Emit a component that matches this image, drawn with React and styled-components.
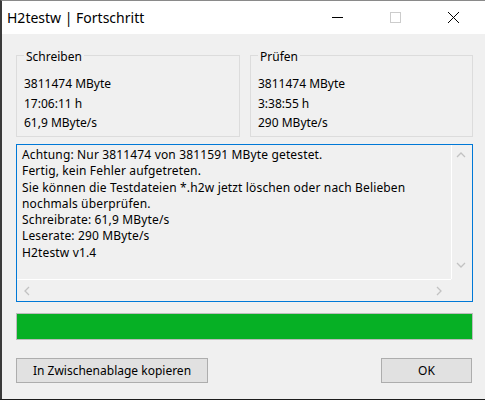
import React from 'react';
import styled, { createGlobalStyle } from 'styled-components';

const GlobalStyle = createGlobalStyle`
  html, body {
    margin: 0;
    padding: 0;
    background: #1c1c1c;
  }
  * {
    box-sizing: border-box;
  }
`;

const Window = styled.div`
  width: 485px;
  height: 399px;
  display: flex;
  flex-direction: column;
  background: #f0f0f0;
  border-left: 2px solid #3a3a3a;
  border-top: 1px solid #8a8a8a;
  font-family: "Noto Sans", "Open Sans", sans-serif;
  font-size: 12px;
  color: #000;
  overflow: hidden;
`;

const TitleBar = styled.div`
  height: 33px;
  flex: none;
  display: flex;
  align-items: center;
  background: #fff;
  padding: 0 3px 0 5px;
`;

const Title = styled.div`
  flex: 1;
  font-size: 14px;
  padding-bottom: 1px;
`;

const Caption = styled.div`
  width: 58px;
  height: 33px;
  display: flex;
  align-items: center;
  justify-content: center;
`;

const Body = styled.div`
  flex: 1;
  display: flex;
  flex-direction: column;
  padding: 11px 12px 0 14px;
`;

const Groups = styled.div`
  display: grid;
  grid-template-columns: 224px 223px;
  gap: 10px;
`;

const Group = styled.fieldset`
  margin: 0;
  height: 92px;
  border: 1px solid #dcdcdc;
  padding: 11px 0 0 7px;
  display: flex;
  flex-direction: column;
  gap: 3.5px;
`;

const Legend = styled.legend`
  margin-left: 0;
  padding: 4px 2px 0;
  line-height: 16px;
`;

const Value = styled.div`
  line-height: 16px;
`;

const TextBox = styled.div`
  margin-top: 7px;
  height: 158px;
  border: 1px solid #0078d7;
  display: grid;
  grid-template-columns: 1fr 21px;
  grid-template-rows: 1fr 22px;
`;

const TextArea = styled.div`
  padding: 2px 0 0 5px;
  line-height: 16.3px;
  white-space: pre;
  overflow: hidden;
  letter-spacing: 0.15px;
  background: #f0f0f0;
`;

const ScrollBar = styled.div`
  display: flex;
  flex-direction: ${p => (p.$vertical ? 'column' : 'row')};
  justify-content: space-between;
  align-items: center;
  background: #f0f0f0;
  ${p => (p.$vertical ? 'border-left: 1px solid #fff;' : 'border-top: 1px solid #fff;')}
  padding: ${p => (p.$vertical ? '6px 3px 10px 0' : '0 8px 0 6px')};
`;

const Corner = styled.div`
  background: #f0f0f0;
`;

const Progress = styled.div`
  margin-top: 11px;
  height: 27px;
  border: 1px solid #bcbcbc;
  background: #e6e6e6;
`;

const Fill = styled.div`
  height: 100%;
  background: #06b025;
`;

const ButtonRow = styled.div`
  margin-top: 18px;
  display: flex;
  justify-content: space-between;
  padding-right: 1px;
`;

const Button = styled.button`
  width: ${p => p.$width}px;
  height: 25px;
  background: #e1e1e1;
  border: 1px solid #adadad;
  font-family: inherit;
  font-size: 12px;
  color: #000;
  padding: 0 0 1px;
`;

const Chevron = ({ dir }) => {
  const pts = {
    up: '1,6 5,2 9,6',
    down: '1,2 5,6 9,2',
    left: '6,1 2,5 6,9',
    right: '2,1 6,5 2,9',
  }[dir];
  const horiz = dir === 'left' || dir === 'right';
  return (
    <svg width={horiz ? 8 : 10} height={horiz ? 10 : 8} viewBox={horiz ? '0 0 8 10' : '0 0 10 8'}>
      <polyline points={pts} fill="none" stroke="#c2c2c2" strokeWidth="1.3" />
    </svg>
  );
};

const LOG = [
  'Achtung: Nur 3811474 von 3811591 MByte getestet.',
  'Fertig, kein Fehler aufgetreten.',
  'Sie können die Testdateien *.h2w jetzt löschen oder nach Belieben',
  'nochmals überprüfen.',
  'Schreibrate: 61,9 MByte/s',
  'Leserate: 290 MByte/s',
  'H2testw v1.4',
];

export default function App() {
  return (
    <>
      <GlobalStyle />
      <Window>
        <TitleBar>
          <Title>H2testw | Fortschritt</Title>
          <Caption>
            <svg width="11" height="11" viewBox="0 0 11 11">
              <line x1="0" y1="5.5" x2="11" y2="5.5" stroke="#000" strokeWidth="1" />
            </svg>
          </Caption>
          <Caption>
            <svg width="11" height="11" viewBox="0 0 11 11">
              <rect x="0.5" y="0.5" width="10" height="10" fill="none" stroke="#cccccc" strokeWidth="1" />
            </svg>
          </Caption>
          <Caption>
            <svg width="11" height="11" viewBox="0 0 11 11">
              <path d="M0 0 L11 11 M11 0 L0 11" stroke="#000" strokeWidth="1" />
            </svg>
          </Caption>
        </TitleBar>
        <Body>
          <Groups>
            <Group>
              <Legend>Schreiben</Legend>
              <Value>3811474 MByte</Value>
              <Value>17:06:11 h</Value>
              <Value>61,9 MByte/s</Value>
            </Group>
            <Group>
              <Legend>Prüfen</Legend>
              <Value>3811474 MByte</Value>
              <Value>3:38:55 h</Value>
              <Value>290 MByte/s</Value>
            </Group>
          </Groups>
          <TextBox>
            <TextArea>{LOG.join('\n')}</TextArea>
            <ScrollBar $vertical>
              <Chevron dir="up" />
              <Chevron dir="down" />
            </ScrollBar>
            <ScrollBar>
              <Chevron dir="left" />
              <Chevron dir="right" />
            </ScrollBar>
            <Corner />
          </TextBox>
          <Progress>
            <Fill style={{ width: '100%' }} />
          </Progress>
          <ButtonRow>
            <Button $width={192}>In Zwischenablage kopieren</Button>
            <Button $width={91}>OK</Button>
          </ButtonRow>
        </Body>
      </Window>
    </>
  );
}
